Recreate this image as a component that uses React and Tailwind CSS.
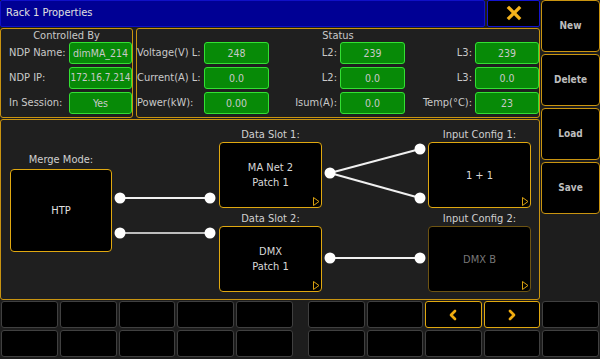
import React from 'react';
import { X, ChevronLeft, ChevronRight } from 'lucide-react';

const orange = 'border-[#c99410]';

function Field({ label, value, labelW = 'w-[68px]', boxW = 'w-[63px]', right = false, small = false }) {
  return (
    <div className="flex items-center h-[23px]">
      <span className={`${labelW} ${right ? 'text-right pr-[3px]' : 'pl-[8px]'} whitespace-nowrap`}>{label}</span>
      <div
        className={`${boxW} h-[22px] rounded-[3px] border border-[#33e033] bg-[#078a07] flex items-center justify-center whitespace-nowrap ${small ? 'text-[10px]' : 'text-[10.5px]'}`}
      >
        {value}
      </div>
    </div>
  );
}

function Corner() {
  return (
    <svg className="absolute right-[1px] bottom-[1px]" width="7" height="9" viewBox="0 0 7 9">
      <polygon points="0.5,0.5 6,4.5 0.5,8.5" fill="none" stroke="#d9a010" strokeWidth="1" />
    </svg>
  );
}

function NodeBox({ children, dim = false }) {
  return (
    <div
      className={`relative w-[103px] h-[66px] rounded-[4px] border ${dim ? 'border-[#6e5412] text-[#777]' : 'border-[#e0a810] text-[#d8d8d8]'} bg-black flex flex-col items-center justify-center leading-[15px]`}
    >
      {children}
      <Corner />
    </div>
  );
}

function SideButton({ children }) {
  return (
    <div className={`h-[52px] rounded-[4px] border ${orange} bg-black flex items-center justify-center text-[#bdbdbd] font-semibold text-[10px]`}>
      {children}
    </div>
  );
}

function Cell({ active = false, children }) {
  return (
    <div
      className={`h-[27px] rounded-[3px] border ${active ? 'border-[#e0a810]' : 'border-[#404040]'} bg-black flex items-center justify-center`}
    >
      {children}
    </div>
  );
}

export default function App() {
  return (
    <div className="w-[600px] h-[359px] bg-[#1d1d1d] overflow-hidden text-[#c9c9c9] text-[11px] leading-[12px] font-['DejaVu_Sans_Condensed','DejaVu_Sans',sans-serif]">
      <div className="flex h-[300px]">
        {/* main area */}
        <div className="w-[540px] flex flex-col">
          {/* title bar */}
          <div className="flex h-[27px] gap-[2px]">
            <div className="flex-1 bg-[#000094] border border-[#1010c8] rounded-[2px] flex items-center pl-[5px] text-[#e0e0e0] text-[11px]">
              Rack 1 Properties
            </div>
            <div className="w-[53px] bg-black border border-[#1414d0] rounded-[2px] flex items-center justify-center">
              <X size={20} strokeWidth={4} color="#f4b21c" strokeLinecap="square" />
            </div>
          </div>

          {/* info panels */}
          <div className="flex h-[91px] gap-[3px] mt-[1px]">
            <div className={`w-[134px] border ${orange} rounded-[3px] bg-[#1f1f1f] flex flex-col`}>
              <div className="text-center h-[12px] mt-[1px]">Controlled By</div>
              <div className="flex flex-col gap-[2px]">
                <Field label="NDP Name:" value="dimMA_214" />
                <Field label="NDP IP:" value="172.16.7.214" small />
                <Field label="In Session:" value="Yes" />
              </div>
            </div>
            <div className={`flex-1 border ${orange} rounded-[3px] bg-[#1f1f1f] flex flex-col`}>
              <div className="text-center h-[12px] mt-[1px]">Status</div>
              <div className="flex">
                <div className="flex flex-col gap-[2px]">
                  <Field label="Voltage(V) L:" value="248" labelW="w-[67px] !pl-0" boxW="w-[65px]" />
                  <Field label="Current(A) L:" value="0.0" labelW="w-[67px] !pl-0" boxW="w-[65px]" />
                  <Field label="Power(kW):" value="0.00" labelW="w-[67px] !pl-0" boxW="w-[65px]" />
                </div>
                <div className="flex flex-col gap-[2px]">
                  <Field label="L2:" value="239" labelW="w-[71px]" boxW="w-[65px]" right />
                  <Field label="L2:" value="0.0" labelW="w-[71px]" boxW="w-[65px]" right />
                  <Field label="Isum(A):" value="0.0" labelW="w-[71px]" boxW="w-[65px]" right />
                </div>
                <div className="flex flex-col gap-[2px]">
                  <Field label="L3:" value="239" labelW="w-[70px]" boxW="w-[64px]" right />
                  <Field label="L3:" value="0.0" labelW="w-[70px]" boxW="w-[64px]" right />
                  <Field label="Temp(°C):" value="23" labelW="w-[70px]" boxW="w-[64px]" right />
                </div>
              </div>
            </div>
          </div>

          {/* routing diagram */}
          <div className={`relative mt-[1px] h-[182px] border ${orange} rounded-[3px] bg-[#1f1f1f] flex text-[#d0d0d0]`}>
            <svg className="absolute inset-0" width="538" height="180">
              <g stroke="#f0f0f0" strokeWidth="2">
                <line x1="119" y1="78" x2="209" y2="78" />
                <line x1="119" y1="113" x2="209" y2="113" stroke="#bdbdbd" />
                <line x1="329" y1="53" x2="419" y2="29" />
                <line x1="329" y1="53" x2="419" y2="78" />
                <line x1="329" y1="138" x2="419" y2="138" />
              </g>
              <g fill="#ffffff">
                <circle cx="119" cy="78" r="5.5" />
                <circle cx="119" cy="113" r="5.5" />
                <circle cx="209" cy="78" r="5.5" />
                <circle cx="209" cy="113" r="5.5" />
                <circle cx="329" cy="53" r="5.5" />
                <circle cx="419" cy="29" r="5.5" />
                <circle cx="419" cy="78" r="5.5" />
                <circle cx="329" cy="138" r="5.5" />
                <circle cx="419" cy="138" r="5.5" />
              </g>
            </svg>

            <div className="ml-[9px] mt-[34px] flex flex-col items-center">
              <div className="h-[12px]">Merge Mode:</div>
              <div className="mt-[3px] relative w-[102px] h-[83px] rounded-[4px] border border-[#e0a810] bg-black flex items-center justify-center text-[#e0e0e0]">
                HTP
              </div>
            </div>

            <div className="ml-[107px] mt-[9px] flex flex-col items-center">
              <div className="h-[12px]">Data Slot 1:</div>
              <div className="mt-[1px]">
                <NodeBox>
                  <span>MA Net 2</span>
                  <span>Patch 1</span>
                </NodeBox>
              </div>
              <div className="h-[12px] mt-[5px]">Data Slot 2:</div>
              <div className="mt-[1px]">
                <NodeBox>
                  <span>DMX</span>
                  <span>Patch 1</span>
                </NodeBox>
              </div>
            </div>

            <div className="ml-[106px] mt-[9px] flex flex-col items-center">
              <div className="h-[12px]">Input Config 1:</div>
              <div className="mt-[1px]">
                <NodeBox>
                  <span>1 + 1</span>
                </NodeBox>
              </div>
              <div className="h-[12px] mt-[5px]">Input Config 2:</div>
              <div className="mt-[1px]">
                <NodeBox dim>
                  <span>DMX B</span>
                </NodeBox>
              </div>
            </div>
          </div>
        </div>

        {/* side buttons */}
        <div className="ml-[1px] w-[59px] flex flex-col gap-[2px]">
          <SideButton>New</SideButton>
          <SideButton>Delete</SideButton>
          <SideButton>Load</SideButton>
          <SideButton>Save</SideButton>
        </div>
      </div>

      {/* bottom keys */}
      <div className="flex mt-[1px] pl-[1px]">
        <div className="w-[292px] grid grid-cols-5 gap-[2px]">
          {Array.from({ length: 10 }).map((_, i) => (
            <Cell key={i} />
          ))}
        </div>
        <div className="ml-[15px] w-[291px] grid grid-cols-5 gap-[2px]">
          <Cell />
          <Cell />
          <Cell active>
            <ChevronLeft size={16} strokeWidth={4} color="#f0ac10" />
          </Cell>
          <Cell active>
            <ChevronRight size={16} strokeWidth={4} color="#f0ac10" />
          </Cell>
          <Cell />
          <Cell />
          <Cell />
          <Cell />
          <Cell />
          <Cell />
        </div>
      </div>
    </div>
  );
}
